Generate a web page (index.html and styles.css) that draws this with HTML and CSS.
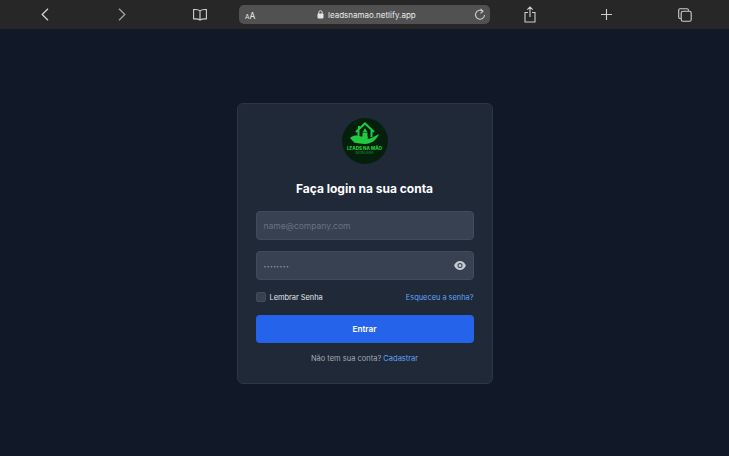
FILE: index.html
```html
<!DOCTYPE html>
<html>
<head>
<meta charset="utf-8">
<title>Leads na Mão</title>
<link rel="stylesheet" href="styles.css">
</head>
<body>
  <div class="toolbar">
    <div class="tool-slot slot-back">
      <svg width="8" height="13" viewBox="0 0 8 13"><path d="M7 .7 1.200 6.500 7 12.300" class="ico"/></svg>
    </div>
    <div class="tool-slot slot-fwd">
      <svg width="8" height="13" viewBox="0 0 8 13"><path d="M1 .7l5.800 5.800L1 12.300" class="ico dim"/></svg>
    </div>
    <div class="tool-slot slot-book">
      <svg width="14" height="12" viewBox="0 0 14 12"><path d="M7 1.800C5.800.8 3.500.4.600.6v9.300c2.900-.2 5.200.1 6.400 1.200 1.200-1.100 3.500-1.400 6.400-1.200V.6C10.500.4 8.200.8 7 1.800zM7 1.800v9.300" class="ico thin"/></svg>
    </div>
    <div class="address">
      <span class="aa"><small>A</small>A</span>
      <span class="url">
        <svg width="7" height="9" viewBox="0 0 7 9"><rect x="0.500" y="3.500" width="6" height="5" rx="1" fill="#e4e4e4"/><path d="M1.800 4V2.500a1.700 1.700 0 0 1 3.400 0V4" fill="none" stroke="#e4e4e4"/></svg>
        leadsnamao.netlify.app
      </span>
      <svg class="reload" width="12" height="13" viewBox="0 0 12 13"><path d="M8.800 3.200A4.500 4.500 0 1 0 10.500 7" class="ico thin"/><path d="M6.500 .8 9 3.200 6.500 5.400" class="ico thin"/></svg>
    </div>
    <div class="tool-slot slot-share">
      <svg width="12" height="17" viewBox="0 0 12 17"><path d="M6 11V1.200M3.300 3.600 6 1l2.700 2.600M4 6.500H1v9.500h10V6.500H8" class="ico thin"/></svg>
    </div>
    <div class="tool-slot slot-plus">
      <svg width="11" height="11" viewBox="0 0 11 11"><path d="M5.500 0v11M0 5.500h11" class="ico thin"/></svg>
    </div>
    <div class="tool-slot slot-tabs">
      <svg width="14" height="14" viewBox="0 0 14 14"><path d="M2.800 10.500H2A1.500 1.500 0 0 1 .7 9V2A1.500 1.500 0 0 1 2 .7h7A1.500 1.500 0 0 1 10.500 2v.8" class="ico thin"/><rect x="3.200" y="3.200" width="10" height="10" rx="1.800" class="ico thin"/></svg>
    </div>
  </div>

  <div class="page">
    <div class="card">
      <div class="logo">
        <svg width="34" height="25" viewBox="0 0 34 25">
          <path d="M8 11 17 2.500 26 11M10.500 9.500V16M23.500 9.500V16M11 5v3" fill="none" stroke="#22c83f" stroke-width="2"/>
          <path d="M14.500 11.500h5V16h-5zM17 7l2.200 4h-4.400z" fill="#22c83f"/>
          <path d="M2 17c4-3.500 8-2.500 11-1.500h5.500c2 0 2 2.300 0 2.600 3.500 0 8-2.600 12.500-5.100-2.500 6.500-8.500 10-14 10-4.500 0-7-1.300-10.500-1.300z" fill="#22c83f"/>
        </svg>
        <span class="logo-name">LEADS NA MÃO</span>
        <span class="logo-sub">IMOBILIÁRIA</span>
      </div>
      <h1>Faça login na sua conta</h1>
      <div class="field">
        <span class="placeholder">name@company.com</span>
      </div>
      <div class="field">
        <span class="placeholder dots">••••••••</span>
        <svg width="12" height="9" viewBox="0 0 12 9"><path d="M6 0C3.300 0 1.100 1.800 0 4.500 1.100 7.200 3.300 9 6 9s4.900-1.800 6-4.500C10.900 1.800 8.700 0 6 0zm0 7a2.500 2.500 0 1 1 0-5 2.500 2.500 0 0 1 0 5zm0-4a1.500 1.500 0 1 0 0 3 1.500 1.500 0 0 0 0-3z" fill="#c4c9d2"/></svg>
      </div>
      <div class="options">
        <span class="remember"><span class="check"></span>Lembrar Senha</span>
        <a class="link">Esqueceu a senha?</a>
      </div>
      <div class="btn">Entrar</div>
      <p class="signup">Não tem sua conta? <a class="link">Cadastrar</a></p>
    </div>
  </div>
</body>
</html>
```

FILE: styles.css
```css
* {
  box-sizing: border-box;
}
html, body {
  margin: 0;
  height: 100%;
}
body {
  background: #111827;
  font-family: Inter, "Liberation Sans", sans-serif;
  color: #fff;
  overflow: hidden;
}
.toolbar {
  height: 29px;
  background: #272727;
  display: flex;
  align-items: center;
}
.tool-slot {
  display: flex;
  justify-content: center;
  align-items: center;
}
.slot-back { width: 90px; }
.slot-fwd { width: 64px; }
.slot-book { width: 92px; }
.address { margin-left: -7px; }
.slot-share { width: 79px; }
.slot-plus { width: 75px; }
.slot-tabs { width: 82px; }
.ico {
  fill: none;
  stroke: #cfcfcf;
  stroke-width: 1.300;
}
.ico.dim {
  stroke: #a0a0a0;
}
.ico.thin {
  stroke-width: 1.100;
}
.address {
  width: 251px;
  height: 19px;
  background: #515151;
  border-radius: 5px;
  display: flex;
  align-items: center;
  padding: 0 4px 0 6px;
  font-size: 8px;
  color: #ececec;
}
.aa {
  width: 72px;
  font-size: 8.500px;
  padding-top: 2px;
}
.aa small {
  font-size: 6.500px;
}
.url {
  flex: 1;
  display: flex;
  align-items: center;
  gap: 4px;
}
.page {
  display: flex;
  justify-content: center;
  padding-top: 74px;
}
.card {
  width: 256px;
  height: 281px;
  background: #1f2937;
  border: 1px solid #2c3644;
  border-radius: 6px;
  padding: 14px 18px 0;
  display: flex;
  flex-direction: column;
}
.logo {
  width: 46px;
  height: 46px;
  border-radius: 50%;
  background: #04200d;
  align-self: center;
  display: flex;
  flex-direction: column;
  align-items: center;
  padding-top: 3px;
  overflow: hidden;
}
.logo-name {
  font-size: 4.500px;
  font-weight: 800;
  color: #22c83f;
  line-height: 5px;
  white-space: nowrap;
}
.logo-sub {
  font-size: 3px;
  color: #1a9a35;
  line-height: 4px;
}
h1 {
  margin: 16px 0 13px;
  font-size: 12px;
  line-height: 18px;
  font-weight: 700;
  text-align: center;
}
.field {
  height: 29px;
  background: #374151;
  border: 1px solid #414b5a;
  border-radius: 4px;
  margin-bottom: 11px;
  padding: 0 7px;
  display: flex;
  align-items: center;
  justify-content: space-between;
  font-size: 8.500px;
  color: #6b7280;
}
.dots {
  font-size: 5px;
  letter-spacing: .4px;
  color: #8b93a1;
}
.options {
  display: flex;
  justify-content: space-between;
  align-items: center;
  font-size: 7.400px;
  height: 14px;
  margin-top: -1px;
}
.remember {
  display: flex;
  align-items: center;
  gap: 4px;
  color: #e5e7eb;
}
.check {
  width: 10px;
  height: 10px;
  background: #374151;
  border: 1px solid #414b5a;
  border-radius: 2px;
}
.link {
  color: #60a5fa;
}
.btn {
  height: 28px;
  margin-top: 11px;
  background: #2563eb;
  border-radius: 4px;
  display: flex;
  align-items: center;
  justify-content: center;
  font-size: 8.200px;
  font-weight: 600;
}
.signup {
  margin: 10px 0 0;
  font-size: 7.500px;
  line-height: 12px;
  color: #a3aab5;
  text-align: center;
}
```
